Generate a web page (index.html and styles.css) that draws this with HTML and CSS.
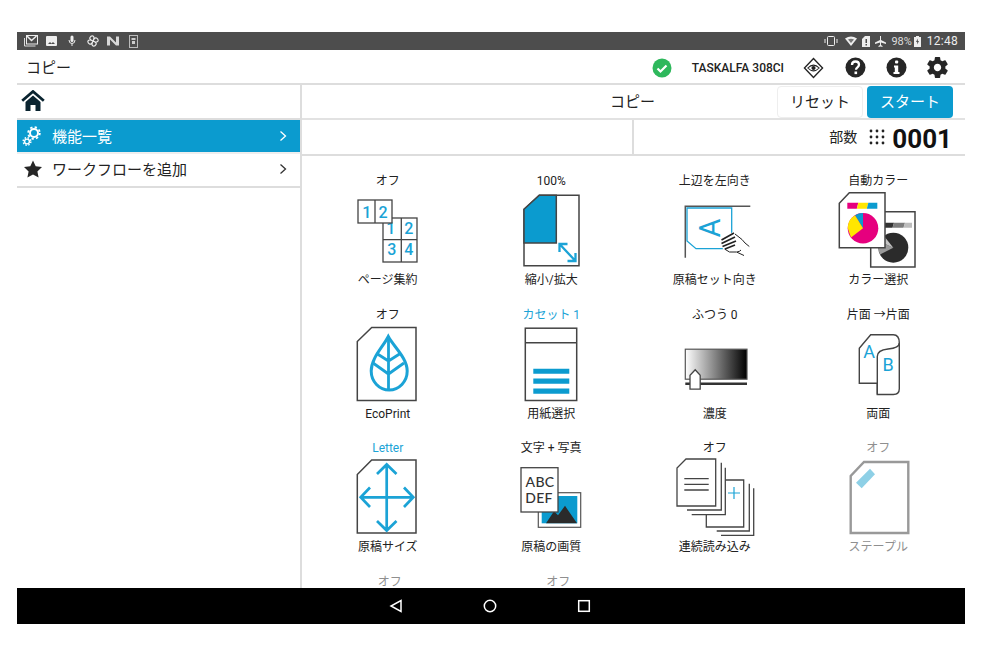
FILE: index.html
```html
<!DOCTYPE html>
<html lang="ja">
<head>
<meta charset="utf-8">
<title>コピー</title>
<link rel="stylesheet" href="styles.css">
</head>
<body>
<div class="device">
  <div class="statusbar">
    <div class="st-left">
      <svg width="14" height="12" viewBox="0 0 14 12"><rect x="2.5" y="0.5" width="11" height="8.5" fill="none" stroke="#eee"/><path d="M3 1l4.500 4.500L12.500 1" fill="none" stroke="#eee" stroke-width="1.500"/><path d="M0.500 3v8h11" fill="none" stroke="#ddd"/></svg>
      <svg class="st-pic" width="11" height="11" viewBox="0 0 11 11"><rect width="11" height="10" rx="1" fill="#eee"/><path d="M2 8l2-2 1.500 1.500L7 6l2 2z" fill="#4d4d4d"/></svg>
      <svg class="st-mic" width="8" height="12" viewBox="0 0 8 12"><rect x="2.500" y="0.500" width="3" height="6.500" rx="1.500" fill="#eee"/><path d="M1 5q0 3.500 3 3.500T7 5M4 8.500V11" fill="none" stroke="#eee"/></svg>
      <svg class="st-fan" width="12" height="12" viewBox="0 0 12 12"><g fill="none" stroke="#eee" stroke-width="1.200"><path d="M6 6Q2 4.500 3 2.500t3-1.500q2 1 0 5zM6 6q4 1.500 3 3.500t-3 1.500q-2-1 0-5zM6 6Q4.500 10 2.500 9t-1.500-3q1-2 5 0zM6 6q1.500-4 3.500-3t1.500 3q-1 2-5 0z"/></g></svg>
      <svg class="st-n" width="12" height="10" viewBox="0 0 12 10"><path d="M0 0.500h3l6 6V0.500h3v9H9L3 3.500v6H0z" fill="#d8d8d8"/></svg>
      <svg class="st-sim" width="9" height="13" viewBox="0 0 9 13"><rect x="0.500" y="0.500" width="8" height="12" fill="none" stroke="#bbb"/><rect x="2.500" y="3" width="4" height="2" fill="#ccc"/><rect x="3" y="6" width="3" height="3" fill="#ccc"/></svg>
    </div>
    <div class="st-right">
      <svg width="14" height="10" viewBox="0 0 14 10"><rect x="3.500" y="0.500" width="7" height="9" rx="1" fill="none" stroke="#eee"/><path d="M1 3v4M13 3v4" stroke="#eee"/></svg>
      <svg class="st-wifi" width="12" height="10" viewBox="0 0 12 10"><path d="M0 2.500Q6-1.500 12 2.500L6 10z" fill="#eee"/><path d="M3 3.500q3-1.500 6 0L6 7z" fill="#777"/></svg>
      <svg class="st-simr" width="8" height="11" viewBox="0 0 8 11"><path d="M0 3l3-3h5v11H0z" fill="#eee"/><rect x="3.500" y="3" width="1.500" height="4" fill="#4d4d4d"/><rect x="3.500" y="8" width="1.500" height="1.500" fill="#4d4d4d"/></svg>
      <svg class="st-plane" width="11" height="11" viewBox="0 0 11 11"><path d="M5 0h1v4l5 2.500V8L6 6.500V9l1.500 1v1L5.500 10.400 3.500 11v-1L5 9V6.500L0 8V6.500L5 4z" fill="#eee"/></svg>
      <span class="st-pct">98%</span>
      <svg class="st-bat" width="7" height="11" viewBox="0 0 7 11"><path d="M2 0h3v1h2v10H0V1h2z" fill="#eee"/><path d="M3.800 2.500L2 6h1.200v2.500L5 5H3.800z" fill="#4d4d4d"/></svg>
      <span class="st-time">12:48</span>
    </div>
  </div>

  <header class="titlebar">
    <span class="title">コピー</span>
    <div class="tools">
      <svg class="tool-check" width="20" height="20" viewBox="0 0 20 20"><circle cx="10" cy="10" r="9.500" fill="#2eb85c"/><path d="M5.500 10.500l3 3 6-6" fill="none" stroke="#fff" stroke-width="2.200"/></svg>
      <span class="model">TASKALFA 308CI</span>
      <svg class="tool-eye" width="21" height="22" viewBox="0 0 22 22"><path d="M11 1l9.500 10L11 21 1.500 11z" fill="none" stroke="#222" stroke-width="1.400"/><path d="M5 11q6-6 12 0-6 6-12 0z" fill="none" stroke="#222" stroke-width="1.100"/><circle cx="11" cy="11" r="2.200" fill="#222"/></svg>
      <svg class="tool-help" width="21" height="21" viewBox="0 0 21 21"><circle cx="10.500" cy="10.500" r="10" fill="#262626"/><path d="M7 8q0-3.500 3.500-3.500T14 7.800c0 2.700-3 2.500-3 5" fill="none" stroke="#fff" stroke-width="2.300"/><rect x="9.500" y="14.500" width="2.600" height="2.600" fill="#fff"/></svg>
      <svg class="tool-info" width="21" height="21" viewBox="0 0 21 21"><circle cx="10.500" cy="10.500" r="10" fill="#262626"/><rect x="9" y="3.500" width="3.200" height="3" rx="1" fill="#fff"/><path d="M8 8.500h4.200v6.500h1.300v2h-6v-2h1.300V10.500H8z" fill="#fff"/></svg>
      <svg class="tool-gear" width="21" height="21" viewBox="2 2 20 20"><path fill="#262626" d="M19.430 12.980c.04-.32.07-.64.07-.98s-.03-.66-.07-.98l2.110-1.650c.19-.15.24-.42.12-.64l-2-3.460c-.12-.22-.39-.3-.61-.22l-2.490 1c-.52-.4-1.080-.73-1.690-.98l-.38-2.650A.488.488 0 0014 2h-4c-.25 0-.46.180-.49.420l-.38 2.650c-.61.250-1.170.59-1.690.98l-2.490-1c-.23-.09-.49 0-.61.220l-2 3.460c-.13.220-.07.490.12.640l2.110 1.650c-.04.320-.07.650-.07.980s.03.660.07.980l-2.110 1.650c-.19.150-.24.420-.12.640l2 3.460c.12.220.39.300.61.220l2.490-1c.52.400 1.080.730 1.690.980l.38 2.650c.03.240.24.420.49.420h4c.25 0 .46-.180.49-.420l.38-2.650c.61-.250 1.170-.590 1.690-.980l2.490 1c.23.090.49 0 .61-.220l2-3.460c.12-.220.07-.490-.12-.640l-2.110-1.650zM12 15.500c-1.930 0-3.500-1.570-3.500-3.500s1.570-3.500 3.500-3.500 3.500 1.570 3.500 3.500-1.570 3.500-3.500 3.500z"/></svg>
    </div>
  </header>

  <div class="main">
    <aside class="sidebar">
      <div class="home-row">
        <svg width="24" height="21" viewBox="0 0 24 21"><path d="M1.200 10.800L12 1.500l10.800 9.300" fill="none" stroke="#0a2430" stroke-width="2.800"/><path d="M4.500 12L12 5.500l7.500 6.500v9h-5v-6h-5v6h-5z" fill="#0a2430"/></svg>
      </div>
      <div class="menu-item menu-active">
        <svg class="menu-icon" width="22" height="22" viewBox="0 0 22 22"><g fill="none" stroke="#fff"><circle cx="12" cy="8" r="4" stroke-width="2"/><circle cx="12" cy="8" r="5.800" stroke-width="1.900" stroke-dasharray="2.300 2.250"/><circle cx="5" cy="16.500" r="2.400" stroke-width="1.400"/><circle cx="5" cy="16.500" r="3.800" stroke-width="1.500" stroke-dasharray="1.500 1.500"/></g></svg>
        <span class="menu-label">機能一覧</span>
        <svg class="chev" width="8" height="12" viewBox="0 0 8 12"><path d="M1.500 1.500L6.500 6l-5 4.500" fill="none" stroke="#fff" stroke-width="1.300"/></svg>
      </div>
      <div class="menu-item menu-plain">
        <svg class="menu-icon" width="22" height="22" viewBox="0 0 22 22"><path d="M11 2.500l2.700 5.800 6.300.800-4.600 4.300 1.200 6.200L11 16.500l-5.600 3.100 1.200-6.200L2 9.100l6.300-.8z" fill="#262626"/></svg>
        <span class="menu-label">ワークフローを追加</span>
        <svg class="chev" width="8" height="12" viewBox="0 0 8 12"><path d="M1.500 1.500L6.500 6l-5 4.500" fill="none" stroke="#333" stroke-width="1.300"/></svg>
      </div>
    </aside>

    <section class="panel">
      <div class="panel-head">
        <span></span>
        <span class="panel-title">コピー</span>
        <div class="actions">
          <button class="btn btn-reset">リセット</button>
          <button class="btn btn-start">スタート</button>
        </div>
      </div>
      <div class="panel-copies">
        <div class="copies-left"></div>
        <div class="copies-right">
          <span class="copies-label">部数</span>
          <svg class="keypad" width="16" height="16" viewBox="0 0 16 16"><g fill="#222"><circle cx="2" cy="2" r="1.400"/><circle cx="8" cy="2" r="1.400"/><circle cx="14" cy="2" r="1.400"/><circle cx="2" cy="8" r="1.400"/><circle cx="8" cy="8" r="1.400"/><circle cx="14" cy="8" r="1.400"/><circle cx="2" cy="14" r="1.400"/><circle cx="8" cy="14" r="1.400"/><circle cx="14" cy="14" r="1.400"/></g></svg>
          <span class="copies-value">0001</span>
        </div>
      </div>

      <div class="grid">
        <div class="item">
          <div class="val">オフ</div>
          <svg class="ico" width="80" height="80" viewBox="0 0 80 80">
            <g fill="#fff" stroke="#444" stroke-width="1.300"><rect x="35" y="27" width="34" height="44"/><path d="M53.300 27v44M35 48.700h34" fill="none"/></g>
            <g class="digit" text-anchor="middle"><text x="42.700" y="42.500">1</text><text x="60.700" y="42.500">2</text><text x="43.700" y="63.500">3</text><text x="60.700" y="63.500">4</text></g>
            <g fill="#fff" stroke="#444" stroke-width="1.300"><rect x="10" y="9" width="34" height="23"/><path d="M27 9v23" fill="none"/></g>
            <g class="digit" text-anchor="middle"><text x="18.700" y="27">1</text><text x="35" y="27">2</text></g>
          </svg>
          <div class="name">ページ集約</div>
        </div>
        <div class="item">
          <div class="val">100%</div>
          <svg class="ico" width="80" height="80" viewBox="0 0 80 80">
            <path d="M28.300 4.300H68v70.400H13V18.300z" fill="#fff" stroke="#444" stroke-width="1.500"/>
            <path d="M28.300 4.300h17V52H13V18.300z" fill="#0b9bcf" stroke="#444" stroke-width="1.500"/>
            <path d="M49 53.500l15 16M48.500 61v-8h8M64.500 62v8h-8" fill="none" stroke="#1ba3d6" stroke-width="2.300"/>
          </svg>
          <div class="name">縮小/拡大</div>
        </div>
        <div class="item">
          <div class="val">上辺を左向き</div>
          <svg class="ico" width="80" height="80" viewBox="0 0 80 80">
            <path d="M75.300 15.300H10.300v51.400" fill="none" stroke="#555" stroke-width="1.500"/>
            <path d="M56.700 44V17H12v33l9 7.700h30" fill="none" stroke="#1ba3d6" stroke-width="1.300"/>
            <text class="seta" transform="rotate(-90 45 37)" x="45" y="37" text-anchor="middle">A</text>
            <path d="M48 47l10-6h3l6 5 3 3.500 4.500 3.500-4 3-4 1-2 3.500 4 3-2 1H59l-4-3-6-2-3-5z" fill="#fff"/>
            <path d="M60 43l7 5.500 3 3.500 4.300 3.500M49.500 58l5 3h7l7.500 3.500M66 59q-1 1.500-4 2" fill="none" stroke="#222" stroke-width="1"/>
            <path d="M46.500 49l12.500-7M46.500 52.500L60 46M47.500 55.500L61 50M50 58l10-4" fill="none" stroke="#222" stroke-width="1.700"/>
          </svg>
          <div class="name">原稿セット向き</div>
        </div>
        <div class="item">
          <div class="val">自動カラー</div>
          <svg class="ico" width="80" height="80" viewBox="0 0 80 80">
            <path d="M32.700 20.700H77V76H32.700z" fill="#fff" stroke="#444" stroke-width="1.500"/>
            <path d="M46 31.700h10l-1.500 5H46z" fill="#333"/><path d="M56 31.700h11l-1.500 5H54.500z" fill="#7d7d7d"/><path d="M67 31.700h7v5h-8.500z" fill="#bdbdbd"/>
            <circle cx="55.300" cy="56.700" r="15" fill="#2b2b2b"/><path d="M55.300 56.700L42 63.500a15 15 0 0 1 0-13z" fill="#9a9a9a"/><path d="M55.300 56.700L46 45a15 15 0 0 0-4 5.500z" fill="#c4c4c4"/>
            <path d="M11.300 1.700H47v55H1.300V12.300z" fill="#fff" stroke="#444" stroke-width="1.500"/>
            <path d="M9.300 11.700h11l-1.500 6H9.300z" fill="#e6007e"/><path d="M20.300 11.700h10l-1.500 6H18.800z" fill="#ffe600"/><path d="M30.300 11.700h9v6h-10.500z" fill="#0b9bcf"/>
            <circle cx="25" cy="37.300" r="15.300" fill="#e6007e"/><path d="M25 37.300V22a15.300 15.300 0 0 0-8 2.300z" fill="#0b9bcf"/><path d="M25 37.300L17 24.300A15.300 15.300 0 0 0 9.700 37L13 46.500z" fill="#ffe600"/>
          </svg>
          <div class="name">カラー選択</div>
        </div>

        <div class="item">
          <div class="val">オフ</div>
          <svg class="ico" width="80" height="80" viewBox="0 0 80 80">
            <path d="M23.700 2.500H68v73H9.300v-59z" fill="#fff" stroke="#444" stroke-width="1.500"/>
            <path d="M40.300 11.500C35 22 23.200 33 23.200 46a18 19 0 0 0 36 0C59.200 33 46 22 40.300 11.500z" fill="none" stroke="#1ba3d6" stroke-width="3"/>
            <path d="M40.500 12v53M40.500 36l-11-7M40.500 36l11-7M40.500 49L25 38M40.500 49L56 38" fill="none" stroke="#1ba3d6" stroke-width="2.800"/>
          </svg>
          <div class="name">EcoPrint</div>
        </div>
        <div class="item">
          <div class="val val-blue">カセット 1</div>
          <svg class="ico" width="80" height="80" viewBox="0 0 80 80">
            <rect x="14.300" y="3.200" width="51.400" height="72.300" fill="#fff" stroke="#444" stroke-width="1.500"/>
            <path d="M14.300 17.800h51.400" stroke="#444" stroke-width="1.500"/>
            <path d="M22.300 43.800h36v5h-36zM22.300 53.500h36v5.300h-36zM22.300 63.500h36v5.300h-36z" fill="#0b9bcf"/>
          </svg>
          <div class="name">用紙選択</div>
        </div>
        <div class="item">
          <div class="val">ふつう 0</div>
          <svg class="ico" width="80" height="80" viewBox="0 0 80 80">
            <defs><linearGradient id="dens"><stop offset="0" stop-color="#fff"/><stop offset="1" stop-color="#000"/></linearGradient></defs>
            <rect x="10.300" y="24.200" width="61.700" height="30" fill="url(#dens)" stroke="#555" stroke-width="1.200"/>
            <path d="M10.300 58.800H72" stroke="#333" stroke-width="2.400"/>
            <path d="M20.200 44.800l5 5.500v13.800H15V50.300z" fill="#fff" stroke="#444" stroke-width="1.300"/>
          </svg>
          <div class="name">濃度</div>
        </div>
        <div class="item">
          <div class="val">片面 →片面</div>
          <svg class="ico" width="80" height="80" viewBox="0 0 80 80">
            <path d="M21.300 23.200L32.700 9.800h22.600Q61.300 9.800 61.300 18v45.800q0 5.700-6 5.700h-16V58.200h-18z" fill="#fff" stroke="#444" stroke-width="1.400"/>
            <path d="M39.300 69.500V31.500q0-6.500 10.700-7.500 11.300-1 11.300-6" fill="none" stroke="#444" stroke-width="1.400"/>
            <text class="dup" x="31" y="32.500" text-anchor="middle">A</text>
            <text class="dup" x="50" y="45.500" text-anchor="middle">B</text>
          </svg>
          <div class="name">両面</div>
        </div>

        <div class="item">
          <div class="val val-blue">Letter</div>
          <svg class="ico" width="80" height="80" viewBox="0 0 80 80">
            <path d="M23.700 2H68v73H9.300V16.500z" fill="#fff" stroke="#444" stroke-width="1.500"/>
            <path d="M38.700 7v65M13 39.300h52M29 16l9.700-9.500L48.500 16M29 63l9.700 9.500L48.500 63M22 29.500l-9.300 9.800L22 49M56 29.500l9.300 9.800L56 49" fill="none" stroke="#1ba3d6" stroke-width="2.700"/>
          </svg>
          <div class="name">原稿サイズ</div>
        </div>
        <div class="item">
          <div class="val">文字 + 写真</div>
          <svg class="ico" width="80" height="80" viewBox="0 0 80 80">
            <rect x="27.300" y="34.700" width="42.400" height="34.600" fill="#fff" stroke="#555" stroke-width="1.200"/>
            <rect x="30.700" y="38" width="35.600" height="27.300" fill="#0b9bcf"/>
            <path d="M35 65.300l8-12 4 4 7-9.500 12 17.500z" fill="#2b2b2b"/>
            <rect x="10" y="9.700" width="37" height="44.300" fill="#fff" stroke="#444" stroke-width="1.300"/>
            <text class="abc" x="29" y="28.700" text-anchor="middle">ABC</text>
            <text class="abc" x="28" y="44.500" text-anchor="middle">DEF</text>
          </svg>
          <div class="name">原稿の画質</div>
        </div>
        <div class="item">
          <div class="val">オフ</div>
          <svg class="ico" width="80" height="80" viewBox="0 0 80 80">
            <g fill="none" stroke="#444" stroke-width="1.300">
              <path d="M46.300 4.700V52H12M50.300 9.700v47H16.700M74.300 25.700V73H41.700M78.700 30.300v47H46"/>
              <path d="M31.300 56.700V69h37.400V22H50.300"/>
              <path d="M11 1h29.700v47H2V10z" fill="#fff"/>
              <path d="M9.300 20.700h24.400M9.300 26.300h24.400M9.300 32h24.400"/>
            </g>
            <path d="M59 29v12M53 35h12" stroke="#1ba3d6" stroke-width="1.200"/>
          </svg>
          <div class="name">連続読み込み</div>
        </div>
        <div class="item item-off">
          <div class="val">オフ</div>
          <svg class="ico" width="80" height="80" viewBox="0 0 80 80">
            <path d="M26 4h44.300v71H12.700V18z" fill="#fff" stroke="#999" stroke-width="2.400"/>
            <path d="M18 24.700l14-14 5 5.600-13.300 14z" fill="#8ed0e6"/>
          </svg>
          <div class="name">ステープル</div>
        </div>

        <div class="item item-off item-shift-a"><div class="val">オフ</div></div>
        <div class="item item-off item-shift-b"><div class="val">オフ</div></div>
      </div>
    </section>
  </div>

  <nav class="navbar">
    <svg width="14" height="14" viewBox="0 0 14 14"><path d="M12 1.500v11L2 7z" fill="none" stroke="#fff" stroke-width="1.500"/></svg>
    <svg width="14" height="14" viewBox="0 0 14 14"><circle cx="7" cy="7" r="5.700" fill="none" stroke="#fff" stroke-width="1.500"/></svg>
    <svg width="14" height="14" viewBox="0 0 14 14"><rect x="1.700" y="1.700" width="10.600" height="10.600" fill="none" stroke="#fff" stroke-width="1.500"/></svg>
  </nav>
</div>
</body>
</html>
```

FILE: styles.css
```css
* { box-sizing: border-box; }
html, body { margin: 0; height: 100%; background: #fff; overflow: hidden; }
body {
  padding: 32px 20px 33px 17px;
  font-family: "Roboto", "Noto Sans CJK JP", sans-serif;
  color: #222;
}
.device { display: flex; flex-direction: column; width: 948px; height: 592px; background: #fff; overflow: hidden; }

.statusbar { flex: none; height: 18px; background: #4d4d4d; display: flex; justify-content: space-between; align-items: center; padding: 0 7px 0 7px; color: #eee; }
.st-left, .st-right { display: flex; align-items: center; }
.st-pic { margin-left: 8px; }
.st-mic { margin-left: 11px; }
.st-fan { margin-left: 11px; }
.st-n { margin-left: 8px; }
.st-sim { margin-left: 10px; }
.st-wifi { margin-left: 7px; }
.st-simr { margin-left: 5px; }
.st-plane { margin-left: 5px; }
.st-pct { margin-left: 5px; font: 11px "Roboto", sans-serif; color: #ddd; }
.st-bat { margin-left: 2px; }
.st-time { margin-left: 6px; font: 12px "Roboto", sans-serif; letter-spacing: 0.25px; color: #eee; }

.titlebar { flex: none; height: 35px; display: flex; justify-content: space-between; align-items: center; padding: 2px 0 0 9px; border-bottom: 2px solid #ddd; }
.title { font-size: 15px; line-height: 20px; color: #222; }
.tools { display: flex; align-items: center; }
.model { margin-left: 20px; font: 500 12px "Roboto", sans-serif; color: #222; }
.tool-eye { margin-left: 19px; }
.tool-help { margin-left: 21px; }
.tool-info { margin-left: 20px; }
.tool-gear { margin-left: 20px; margin-right: 17px; }

.main { flex: 1; min-height: 0; display: flex; }
.sidebar { flex: none; width: 285px; border-right: 2px solid #ddd; }
.home-row { height: 35px; padding: 5px 0 0 4px; border-bottom: 2px solid #ddd; display: flex; align-items: flex-start; }
.menu-item { height: 34px; display: flex; align-items: center; padding: 0 13px 0 5px; border-bottom: 2px solid #ddd; }
.menu-active { background: #0b9bcf; color: #fff; border-bottom-color: #eee; }
.menu-plain { padding-bottom: 2px; }
.menu-icon { flex: none; }
.menu-label { margin-left: 8px; font-size: 15px; line-height: 20px; padding-top: 2px; flex: 1; }
.chev { flex: none; }

.panel { flex: 1; min-width: 0; display: flex; flex-direction: column; }
.panel-head { flex: none; height: 35px; display: grid; grid-template-columns: 1fr auto 1fr; align-items: center; border-bottom: 2px solid #e2e2e2; }
.panel-title { font-size: 15px; line-height: 20px; padding: 0 2px 0 0; }
.actions { display: flex; justify-content: flex-end; gap: 4px; padding-right: 12px; }
.btn { width: 86px; height: 32px; border-radius: 4px; font: 15px "Roboto", "Noto Sans CJK JP", sans-serif; padding: 0 0 3px; }
.btn-reset { background: #fff; color: #222; border: 1px solid #eee; }
.btn-start { background: #0b9bcf; color: #fff; border: 0; }

.panel-copies { flex: none; height: 36px; display: flex; border-bottom: 2px solid #ddd; }
.copies-left { width: 332px; border-right: 2px solid #ddd; }
.copies-right { flex: 1; display: flex; align-items: center; justify-content: flex-end; padding-right: 13px; }
.copies-label { font-size: 14px; line-height: 18px; }
.keypad { margin-left: 12px; }
.copies-value { margin-left: 7px; font: 700 26px/30px "Roboto", sans-serif; color: #111; padding-top: 3px; }

.grid { flex: 1; min-height: 0; overflow: hidden; display: grid; grid-template-columns: repeat(4, 163.5px); grid-auto-rows: 133.5px; padding-left: 4px; }
.item { display: flex; flex-direction: column; align-items: center; padding-top: 17px; }
.item-shift-a { padding-left: 4px; }
.item-shift-b { padding-left: 14px; }
.val, .name { font-size: 12px; line-height: 16px; color: #222; white-space: nowrap; }
.val-blue { color: #1ba3d6; }
.ico { display: block; margin: 2px 0 1px; flex: none; }
.item-off .val, .item-off .name { color: #8f8f8f; }
.digit text { font: 500 16px "Roboto", sans-serif; fill: #1ba3d6; }
.dup { font: 400 18px "Roboto", sans-serif; fill: #1ba3d6; }
.abc { font: 500 14px "Lato", sans-serif; letter-spacing: 0.3px; fill: #333; }
.seta { font: 400 29px "Roboto", sans-serif; fill: #1ba3d6; }

.navbar { flex: none; height: 36px; background: #000; display: flex; align-items: center; gap: 80px; padding-left: 372px; }
```
